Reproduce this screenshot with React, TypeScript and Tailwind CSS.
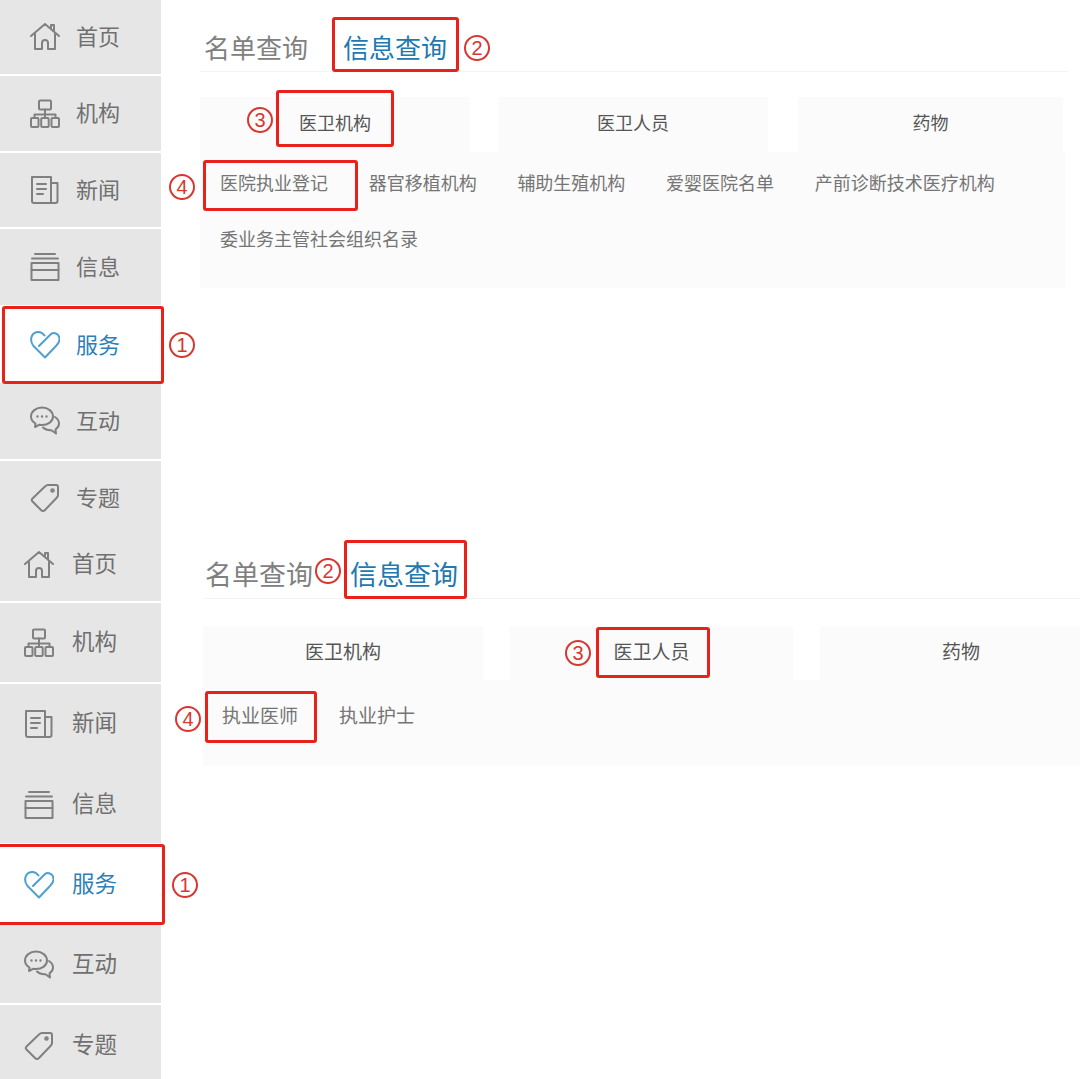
import type { ReactNode } from 'react';

const font = "font-['Liberation_Sans','Noto_Sans_CJK_SC',sans-serif]";

function Icon({ children, color = '#808080' }: { children: ReactNode; color?: string }) {
  return (
    <svg viewBox="0 0 30 30" fill="none" stroke={color} strokeWidth="2" strokeLinejoin="round" strokeLinecap="round" className="h-[30px] w-[30px] shrink-0">
      {children}
    </svg>
  );
}

const HomeIcon = () => (
  <Icon>
    <path d="M1 14 15 2l14 12M21 6V3h3v6" />
    <path d="M5 12v15h7v-6a3 3 0 0 1 6 0v6h7V12" />
  </Icon>
);
const OrgIcon = () => (
  <Icon>
    <rect x="9" y="1.5" width="12" height="9" rx="1" />
    <path d="M15 10.5V19M4.5 19v-3.5h21V19" />
    <rect x="1" y="19" width="7.5" height="9" rx="1" />
    <rect x="11.2" y="19" width="7.5" height="9" rx="1" />
    <rect x="21.5" y="19" width="7.5" height="9" rx="1" />
  </Icon>
);
const NewsIcon = () => (
  <Icon>
    <path d="M2 2h19v26H4q-2 0-2-2z" />
    <path d="M21 8h6.5v18q0 2-2 2H21M7 9h9M7 14h9M7 19h6" />
  </Icon>
);
const StackIcon = () => (
  <Icon>
    <path d="M5 2h20M2 6.5h26" />
    <rect x="1.5" y="11" width="27" height="17" />
    <path d="M1.5 18h27" />
  </Icon>
);
const HeartIcon = () => (
  <Icon color="#4f9fcf">
    <path d="M9 16 20 5c3-3.500 9.500-2 9.500 4.500 0 2.500-1.500 4.500-3.500 6.500L15 27.500 3.500 16C-.5 11 .5 2.500 8 2c3-.2 5 1.500 6.500 3.500" />
  </Icon>
);
const ChatIcon = () => (
  <Icon>
    <path d="M12 1.500C6 1.500 1 5.500 1 10.500c0 3 2 5.500 4.500 7L5 21l4.500-2.300c1 .2 2 .3 2.500.3 6 0 11-3.500 11-8.500S18 1.500 12 1.500z" />
    <path d="M25 11c2.500 1.500 4 3.800 4 6.500 0 2.500-1.500 4.500-3.500 5.800l.5 4.200-4.500-3.300c-3.500.3-6.500-.7-8.500-2.700" />
    <path d="M7.500 10.500h.01M12 10.500h.01M16.500 10.500h.01" strokeWidth="2.400" />
  </Icon>
);
const TagIcon = () => (
  <Icon>
    <path d="M2.500 15.500 15 3.500q1.500-1.500 3-1.500h8q2 0 2 2v8q0 1.500-1.500 3L15 27q-2 2-4 0l-8.500-8.500q-1.500-1.500 0-3z" />
    <circle cx="22.500" cy="7.500" r="1.300" />
  </Icon>
);

const navItems = [
  { label: '首页', icon: <HomeIcon /> },
  { label: '机构', icon: <OrgIcon /> },
  { label: '新闻', icon: <NewsIcon /> },
  { label: '信息', icon: <StackIcon /> },
  { label: '服务', icon: <HeartIcon />, active: true },
  { label: '互动', icon: <ChatIcon /> },
  { label: '专题', icon: <TagIcon /> },
];

function Sidebar({ rows, inner }: { rows: string[]; inner: string }) {
  return (
    <aside className="flex w-[161px] shrink-0 flex-col">
      {navItems.map((item, i) => (
        <div
          key={item.label}
          className={`flex items-center ${rows[i]} ${inner} ${item.active ? 'bg-white text-[#2f7fb5]' : 'bg-[#e6e6e6] text-[#707070]'}`}
        >
          {item.icon}
          <span>{item.label}</span>
        </div>
      ))}
    </aside>
  );
}

function Box({ className }: { className: string }) {
  return <div className={`absolute rounded-[3px] border-[3px] border-[#e8221b] ${className}`} />;
}

function Num({ n, className }: { n: number; className: string }) {
  return (
    <div className={`absolute flex h-[26px] w-[26px] items-center justify-center rounded-full border-2 border-[#d8372f] text-[20px] leading-none text-[#d8372f] ${className}`}>
      {n}
    </div>
  );
}

export default function App() {
  return (
    <div className={`relative h-[1079px] w-[1080px] overflow-hidden bg-white ${font}`}>
      {/* first screenshot */}
      <section className="flex h-[535px]">
        <Sidebar
          inner="gap-[16px] pl-[30px] text-[22px]"
          rows={[
            'h-[76px] border-b-2 border-white',
            'h-[77px] border-b-2 border-white',
            'h-[76px] border-b-2 border-white',
            'h-[76px]',
            'h-[78px] pt-[2px]',
            'h-[78px] border-b-2 border-white',
            'h-[74px]',
          ]}
        />
        <div className="flex-1 pl-[39px] pr-[12px]">
          <div className="flex h-[72px] items-end border-b border-[#f4f4f4] pb-[4px] text-[26px] leading-[36px]">
            <span className="ml-[4px] text-[#808080]">名单查询</span>
            <span className="ml-[35px] text-[#2378ad]">信息查询</span>
          </div>
          <div className="mt-[25px] flex w-[863px] text-[18px] text-[#555555]">
            <div className="flex h-[55px] w-[270px] items-center justify-center bg-[#fbfbfb]">医卫机构</div>
            <div className="ml-[28px] flex h-[55px] w-[270px] items-center justify-center bg-[#fbfbfb]">医卫人员</div>
            <div className="ml-[30px] flex h-[55px] w-[265px] items-center justify-center bg-[#fbfbfb]">药物</div>
          </div>
          <div className="flex h-[136px] w-[865px] flex-wrap content-start gap-x-[40.700px] bg-[#fbfbfb] pl-[20px] pt-[4px] text-[18px] leading-[56px] text-[#757575]">
            <span>医院执业登记</span>
            <span>器官移植机构</span>
            <span>辅助生殖机构</span>
            <span>爱婴医院名单</span>
            <span>产前诊断技术医疗机构</span>
            <span>委业务主管社会组织名录</span>
          </div>
        </div>
      </section>

      {/* second screenshot */}
      <section className="flex h-[544px]">
        <Sidebar
          inner="gap-[18px] pl-[24px] text-[22.500px]"
          rows={[
            'h-[68px] border-b-2 border-white pb-[6px]',
            'h-[81px] border-b-2 border-white',
            'h-[79px]',
            'h-[80px] pt-[3px]',
            'h-[80px] pt-[4px]',
            'h-[82px] border-b-2 border-white pt-[3px]',
            'h-[74px] pt-[7px]',
          ]}
        />
        <div className="flex-1 overflow-hidden pl-[42px]">
          <div className="flex h-[64px] items-end border-b border-[#f4f4f4] pb-[3px] text-[27px] leading-[38px]">
            <span className="ml-[2px] text-[#808080]">名单查询</span>
            <span className="ml-[37px] text-[#2378ad]">信息查询</span>
          </div>
          <div className="mt-[27px] flex text-[19px] text-[#555555]">
            <div className="flex h-[54px] w-[280px] shrink-0 items-center justify-center bg-[#fbfbfb]">医卫机构</div>
            <div className="ml-[27px] flex h-[54px] w-[283px] shrink-0 items-center justify-center bg-[#fbfbfb]">医卫人员</div>
            <div className="ml-[27px] flex h-[54px] w-[282px] shrink-0 items-center justify-center bg-[#fbfbfb]">药物</div>
          </div>
          <div className="flex h-[86px] gap-x-[41px] bg-[#fbfbfb] pl-[19px] pt-[12px] text-[19px] leading-[50px] text-[#757575]">
            <span>执业医师</span>
            <span>执业护士</span>
          </div>
        </div>
      </section>

      {/* red annotations */}
      <Box className="left-[2px] top-[306px] h-[78px] w-[162px]" />
      <Box className="left-[332px] top-[17px] h-[55px] w-[127px]" />
      <Box className="left-[276px] top-[90px] h-[57px] w-[118px]" />
      <Box className="left-[203px] top-[160px] h-[51px] w-[155px]" />
      <Num n={1} className="left-[169px] top-[332px]" />
      <Num n={2} className="left-[464px] top-[35px]" />
      <Num n={3} className="left-[247px] top-[107px]" />
      <Num n={4} className="left-[169px] top-[174px]" />

      <Box className="left-[-6px] top-[844px] h-[81px] w-[171px]" />
      <Box className="left-[344px] top-[540px] h-[59px] w-[123px]" />
      <Box className="left-[596px] top-[627px] h-[51px] w-[114px]" />
      <Box className="left-[205px] top-[691px] h-[52px] w-[112px]" />
      <Num n={1} className="left-[172px] top-[872px]" />
      <Num n={2} className="left-[315px] top-[558px]" />
      <Num n={3} className="left-[565px] top-[640px]" />
      <Num n={4} className="left-[175px] top-[706px]" />
    </div>
  );
}
